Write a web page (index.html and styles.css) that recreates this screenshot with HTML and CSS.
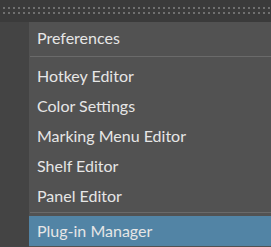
FILE: index.html
```html
<!DOCTYPE html>
<html lang="en">
<head>
  <meta charset="UTF-8">
  <title>Windows Menu</title>
  <link rel="stylesheet" href="styles.css">
</head>
<body>
  <div class="toolbar">
    <div class="grip"></div>
  </div>
  <div class="main">
    <div class="side"></div>
    <ul class="menu">
      <li class="item">Preferences</li>
      <li class="sep sep-top"></li>
      <li class="item">Hotkey Editor</li>
      <li class="item">Color Settings</li>
      <li class="item">Marking Menu Editor</li>
      <li class="item">Shelf Editor</li>
      <li class="item">Panel Editor</li>
      <li class="sep"></li>
      <li class="item active">Plug-in Manager</li>
    </ul>
  </div>
</body>
</html>
```

FILE: styles.css
```css
html, body {
  margin: 0;
  padding: 0;
  height: 100%;
  overflow: hidden;
}
body {
  background-color: #444444;
  font-family: Lato, Arial, sans-serif;
  font-size: 16px;
  color: #e6e6e6;
}
.toolbar {
  height: 22px;
  background-color: #3b3b3b;
  padding: 7px 0 0 3px;
  box-sizing: border-box;
}
.grip {
  height: 7px;
  background:
    linear-gradient(#3b3b3b, #3b3b3b) 0 2px / 100% 3px no-repeat,
    linear-gradient(90deg, #707070 0 2px, transparent 2px 5px) 0 0 / 5px 100% repeat-x;
}
.main {
  display: flex;
  height: calc(100% - 22px);
}
.side {
  width: 29px;
  background-color: #444444;
}
.menu {
  flex: 1;
  list-style: none;
  margin: 0;
  padding: 1px 0 0 0;
  background-color: #525252;
}
.item {
  height: 30px;
  line-height: 30px;
  padding-left: 8px;
  white-space: nowrap;
}
.item.active {
  background-color: #5284a5;
}
.sep {
  height: 1px;
  background-color: #6a6a6a;
  margin: 1px 0 3px 1px;
}
.sep-top {
  margin: 3px 0 4px 1px;
}
```
